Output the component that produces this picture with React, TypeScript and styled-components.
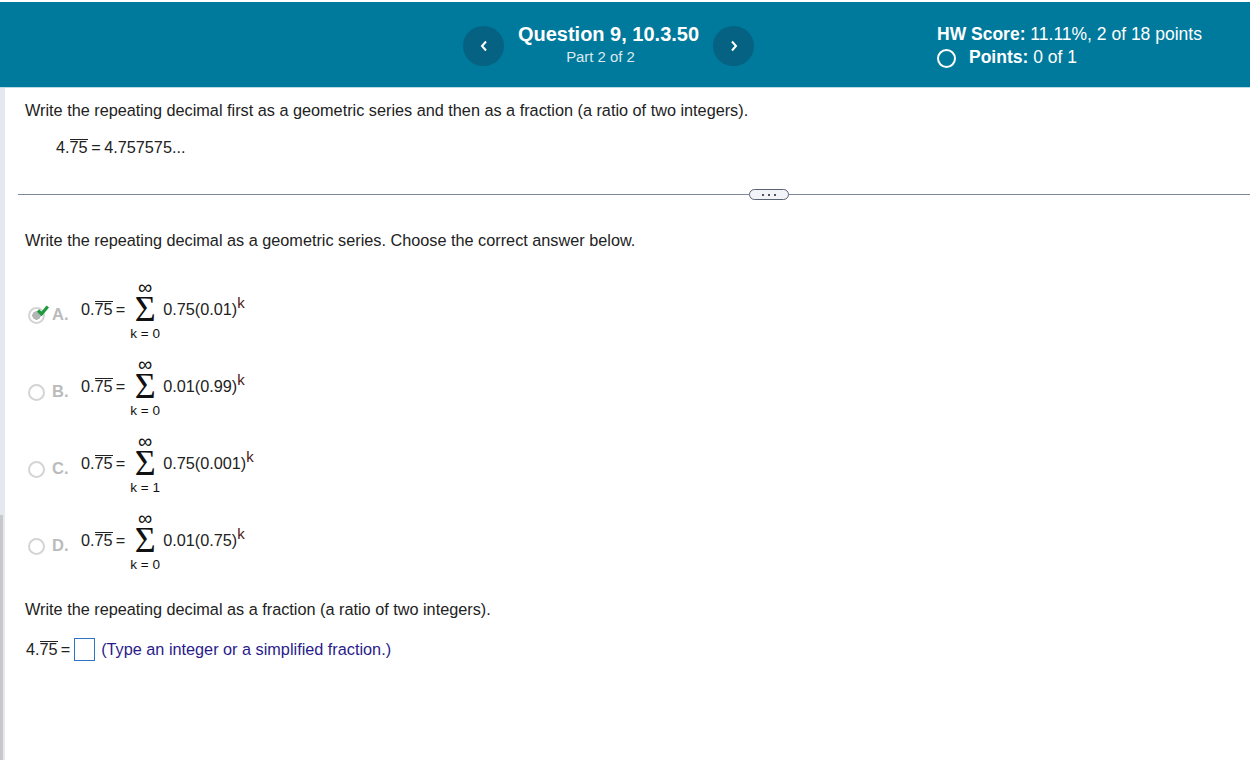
import { createGlobalStyle } from "styled-components";
import styled from "styled-components";

const GlobalStyle = createGlobalStyle`
  html, body {
    margin: 0;
    padding: 0;
    background: #fff;
    height: 100%;
    overflow: hidden;
  }
  body {
    font-family: "Liberation Sans", Arial, sans-serif;
    font-size: 16.25px;
    color: #222;
  }
`;

type OptionData = {
  letter: string;
  lower: string;
  term: string;
  selected?: boolean;
};

const options: OptionData[] = [
  { letter: "A.", lower: "k = 0", term: "0.75(0.01)", selected: true },
  { letter: "B.", lower: "k = 0", term: "0.01(0.99)" },
  { letter: "C.", lower: "k = 1", term: "0.75(0.001)" },
  { letter: "D.", lower: "k = 0", term: "0.01(0.75)" },
];

function Chevron({ flip }: { flip?: boolean }) {
  return (
    <svg width="8" height="12" viewBox="0 0 8 12">
      <path
        d={flip ? "M2 1.5 6 6l-4 4.5" : "M6 1.5 2 6l4 4.5"}
        fill="none"
        stroke="#fff"
        strokeWidth="2"
      />
    </svg>
  );
}

function Repeating({ whole }: { whole: string }) {
  return (
    <span>
      {whole}.<Bar>75</Bar>
    </span>
  );
}

function Option({ letter, lower, term, selected }: OptionData) {
  return (
    <OptionRow>
      <RadioSlot>
        <Radio selected={selected} />
        {selected && (
          <CheckMark width="12" height="11" viewBox="0 0 12 11">
            <path d="M1 5.5 4.5 9 10.8 1.5" fill="none" stroke="#1f9a3c" strokeWidth="3.2" />
          </CheckMark>
        )}
      </RadioSlot>
      <Letter>{letter}</Letter>
      <Expression>
        <Repeating whole="0" />
        <Equals>=</Equals>
        <SumStack>
          <InfinityMark>∞</InfinityMark>
          <Sigma>Σ</Sigma>
          <Lower>{lower}</Lower>
        </SumStack>
        <Term>
          {term}
          <Power>k</Power>
        </Term>
      </Expression>
    </OptionRow>
  );
}

export default function App() {
  return (
    <>
      <GlobalStyle />
      <Track />
      <Thumb />
      <Header>
        <NavButton aria-label="Previous question">
          <Chevron />
        </NavButton>
        <TitleBlock>
          <Title>Question 9, 10.3.50</Title>
          <Part>Part 2 of 2</Part>
        </TitleBlock>
        <NavButton aria-label="Next question">
          <Chevron flip />
        </NavButton>
        <Score>
          <ScoreLine>
            <strong>HW Score:</strong> 11.11%, 2 of 18 points
          </ScoreLine>
          <PointsLine>
            <PointsRing />
            <span>
              <strong>Points:</strong> 0 of 1
            </span>
          </PointsLine>
        </Score>
      </Header>

      <Prompt>
        Write the repeating decimal first as a geometric series and then as a fraction (a ratio of
        two integers).
      </Prompt>
      <Given>
        <Repeating whole="4" /> = 4.757575...
      </Given>

      <Divider>
        <Rule width="731px" />
        <Pill>
          <Dot />
          <Dot />
          <Dot />
        </Pill>
        <Rule width="461px" />
      </Divider>

      <SeriesPrompt>
        Write the repeating decimal as a geometric series. Choose the correct answer below.
      </SeriesPrompt>

      <OptionList>
        {options.map((o) => (
          <Option key={o.letter} {...o} />
        ))}
      </OptionList>

      <FractionPrompt>Write the repeating decimal as a fraction (a ratio of two integers).</FractionPrompt>
      <AnswerRow>
        <Repeating whole="4" />
        <Equals>=</Equals>
        <AnswerBox />
        <Hint>(Type an integer or a simplified fraction.)</Hint>
      </AnswerRow>
    </>
  );
}

const Track = styled.div`
  position: fixed;
  left: 0;
  top: 88px;
  bottom: 0;
  width: 5px;
  background: #e6e8f0;
`;

const Thumb = styled.div`
  position: fixed;
  left: 0;
  top: 515px;
  bottom: 0;
  width: 3px;
  background: #c8c8c8;
`;

const Header = styled.header`
  margin-top: 2px;
  height: 86px;
  box-sizing: border-box;
  border-bottom: 1px solid #bcd9e4;
  background: #007a9c;
  background-clip: padding-box;
  display: flex;
  align-items: center;
  padding: 3px 0 0 463px;
  color: #fff;
`;

const NavButton = styled.button`
  width: 41px;
  height: 40px;
  padding: 0;
  border: none;
  border-radius: 50%;
  background: #056282;
  display: flex;
  align-items: center;
  justify-content: center;
`;

const TitleBlock = styled.div`
  width: 209px;
  margin-bottom: 2px;
  text-align: center;
`;

const Title = styled.div`
  font-size: 20px;
  font-weight: 700;
  line-height: 25px;
`;

const Part = styled.div`
  padding-right: 16px;
  font-size: 14.9px;
  line-height: 21px;
  color: #dce9ee;
`;

const Score = styled.div`
  margin: 0 0 1px 183px;
`;

const ScoreLine = styled.div`
  line-height: 23px;
  font-size: 17.5px;
`;

const PointsLine = styled.div`
  display: flex;
  align-items: center;
  gap: 13px;
  line-height: 22px;
  font-size: 17.5px;
`;

const PointsRing = styled.span`
  width: 19px;
  height: 19px;
  box-sizing: border-box;
  border: 2.5px solid #fff;
  border-radius: 50%;
  margin-top: 3px;
`;

const Prompt = styled.p`
  margin: 12px 0 0 25px;
  line-height: 20px;
`;

const Given = styled.div`
  margin: 17px 0 0 56px;
  line-height: 20px;
  word-spacing: -1px;
`;

const Bar = styled.span`
  display: inline-block;
  line-height: 15px;
  border-top: 1px solid #222;
`;

const Divider = styled.div`
  margin: 32px 0 0 18px;
  height: 11px;
  display: flex;
  align-items: center;
`;

const Rule = styled.div<{ width: string }>`
  width: ${(p) => p.width};
  height: 1px;
  background: #7d8899;
`;

const Pill = styled.div`
  width: 40px;
  height: 11px;
  box-sizing: border-box;
  border: 1px solid #5a6372;
  border-radius: 6px;
  background: #f2f4f7;
  display: flex;
  align-items: center;
  justify-content: center;
  gap: 4px;
`;

const Dot = styled.span`
  width: 2px;
  height: 2px;
  background: #4d5563;
`;

const SeriesPrompt = styled.p`
  margin: 30px 0 0 25px;
  line-height: 20px;
`;

const OptionList = styled.div`
  margin-top: 24px;
`;

const OptionRow = styled.div`
  height: 77px;
  padding-left: 28px;
  display: flex;
  align-items: center;
`;

const RadioSlot = styled.div`
  position: relative;
  width: 17px;
  height: 17px;
  margin-top: 6px;
`;

const Radio = styled.div<{ selected?: boolean }>`
  width: 17px;
  height: 17px;
  box-sizing: border-box;
  border: 2px solid #d4d4d4;
  border-radius: 50%;
  background: ${(p) =>
    p.selected ? "radial-gradient(circle, #b5b5b5 0 4px, #fff 4.5px)" : "#fff"};
`;

const CheckMark = styled.svg`
  position: absolute;
  left: 9px;
  top: -2px;
`;

const Letter = styled.span`
  width: 29px;
  margin: 4px 0 0 7px;
  font-weight: 700;
  font-size: 16.5px;
  color: #bbb;
`;

const Expression = styled.div`
  display: flex;
  align-items: center;
  margin-top: -6px;
  color: #222;
`;

const Equals = styled.span`
  margin: 0 3px;
`;

const SumStack = styled.div`
  width: 30px;
  margin: 0 3px 0 2px;
  display: flex;
  flex-direction: column;
  align-items: center;
  position: relative;
  top: 2px;
  color: #111;
`;

const InfinityMark = styled.span`
  font-size: 20px;
  line-height: 14px;
`;

const Sigma = styled.span`
  font-family: "Liberation Serif", "Times New Roman", serif;
  font-size: 36px;
  line-height: 30px;
`;

const Lower = styled.span`
  font-size: 13.5px;
  line-height: 20px;
`;

const Term = styled.span`
  white-space: nowrap;
`;

const Power = styled.sup`
  font-size: 15px;
  line-height: 0;
  color: #4a1515;
  vertical-align: 7px;
`;

const FractionPrompt = styled.p`
  margin: 17px 0 0 25px;
  line-height: 20px;
`;

const AnswerRow = styled.div`
  margin: 18px 0 0 26px;
  height: 25px;
  display: flex;
  align-items: center;
  white-space: nowrap;
`;

const AnswerBox = styled.span`
  width: 21px;
  height: 23px;
  margin-left: 1px;
  box-sizing: border-box;
  border: 1px solid #2f72c4;
`;

const Hint = styled.span`
  margin-left: 6px;
  color: #2a1b8a;
`;
